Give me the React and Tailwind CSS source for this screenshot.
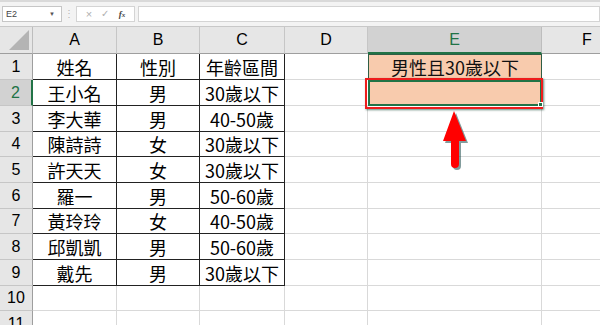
import React from "react";

const cols = [
  { key: "A", w: 84 },
  { key: "B", w: 83 },
  { key: "C", w: 85 },
  { key: "D", w: 83 },
  { key: "E", w: 174 },
  { key: "F", w: 91 },
];

const rowHeights = [26, 26, 26, 25, 26, 26, 25, 26, 26, 25, 26];

const data = [
  ["姓名", "性別", "年齡區間"],
  ["王小名", "男", "30歲以下"],
  ["李大華", "男", "40-50歲"],
  ["陳詩詩", "女", "30歲以下"],
  ["許天天", "女", "30歲以下"],
  ["羅一", "男", "50-60歲"],
  ["黃玲玲", "女", "40-50歲"],
  ["邱凱凱", "男", "50-60歲"],
  ["戴先", "男", "30歲以下"],
];

const cjk = { fontFamily: '"Noto Sans CJK TC", "Noto Sans", sans-serif' };
const ui = { fontFamily: '"Liberation Sans", Arial, sans-serif' };

const FormulaBar = () => (
  <div className="h-[27px] bg-[#f3f3f3] border-t-2 border-[#d9d9d9] border-b border-b-[#c8c8c8] flex items-center" style={ui}>
    <div className="ml-[2px] w-[60px] h-[16px] bg-white border border-[#c6c6c6] flex items-center justify-between pl-[3px] pr-[6px]">
      <span className="text-[9px] text-[#444] leading-none">E2</span>
      <span className="text-[6px] text-[#555] leading-none">▼</span>
    </div>
    <div className="w-[14px] flex justify-center text-[10px] text-[#b5b5b5] leading-none">⋮</div>
    <div className="w-[59px] h-[16px] bg-white border border-[#d4d4d4] flex items-center justify-around px-[4px]">
      <span className="text-[11px] text-[#b0b0b0] leading-none">×</span>
      <span className="text-[10px] text-[#b0b0b0] leading-none">✓</span>
      <span className="text-[9px] italic font-bold text-[#444] leading-none" style={{ fontFamily: '"Liberation Serif", serif' }}>
        f<span className="text-[7px]">x</span>
      </span>
    </div>
    <div className="ml-[3px] flex-1 h-[16px] bg-white border border-[#d4d4d4]" />
  </div>
);

const ColumnHeader = () => (
  <div className="flex h-[27px]" style={ui}>
    <div className="w-[33px] shrink-0 bg-[#e6e6e6] border-r border-[#bdbdbd] border-b border-b-[#9e9e9e] flex items-end justify-end p-[3px]">
      <div className="w-0 h-0 border-l-[20px] border-l-transparent border-b-[20px] border-b-[#b4b4b4]" />
    </div>
    {cols.map((c) => {
      const sel = c.key === "E";
      return (
        <div
          key={c.key}
          style={{ width: c.w }}
          className={
            sel
              ? "shrink-0 bg-[#d2d2d2] border-r border-[#bdbdbd] border-b-2 border-b-[#217346] flex items-center justify-center text-[16px] text-[#217346]"
              : "shrink-0 bg-[#e6e6e6] border-r border-[#c6c6c6] border-b border-b-[#9e9e9e] flex items-center justify-center text-[16px] text-black"
          }
        >
          {c.key}
        </div>
      );
    })}
  </div>
);

const Row = ({ index, h }) => {
  const n = index + 1;
  const rowData = data[index];
  const selRow = n === 2;
  return (
    <div className="flex" style={{ height: h }}>
      <div
        className={
          selRow
            ? "w-[33px] shrink-0 bg-[#d2d2d2] border-r-2 border-[#217346] border-b border-b-[#c6c6c6] flex items-center justify-center text-[16px] text-[#217346]"
            : "w-[33px] shrink-0 bg-[#e6e6e6] border-r border-[#9e9e9e] border-b border-b-[#c6c6c6] flex items-center justify-center text-[16px] text-black"
        }
        style={ui}
      >
        {n}
      </div>
      {cols.map((c, ci) => {
        const inTable = rowData && ci < 3;
        let cls = "shrink-0 border-r border-b flex items-center justify-center text-[18px] leading-none text-black ";
        cls += inTable ? "border-[#222]" : "border-[#d9d9d9]";
        if (c.key === "E" && n === 1) {
          return (
            <div key={c.key} style={{ width: c.w, ...cjk }} className="shrink-0 bg-[#f8cbad] border border-[#2f5e45] flex items-center justify-center text-[18px] leading-none text-[#111]">
              男性且30歲以下
            </div>
          );
        }
        if (c.key === "E" && n === 2) {
          return (
            <div key={c.key} style={{ width: c.w }} className="shrink-0 relative bg-[#f8cbad] border-2 border-[#217346]">
              <div className="absolute -left-[5px] -top-[4px] -right-[3px] -bottom-[5px] border-[2.5px] border-[#ee1c1c] shadow-[1px_1px_2px_rgba(0,60,40,0.6)]" />
              <div className="absolute -right-[3px] -bottom-[3px] w-[5px] h-[5px] bg-[#217346] border border-white" />
            </div>
          );
        }
        if (c.key === "D" && (n === 1 || n === 2)) {
          cls = "shrink-0 border-b border-[#d9d9d9] flex";
        }
        return (
          <div key={c.key} style={{ width: c.w, ...cjk }} className={cls}>
            {inTable ? rowData[ci] : ""}
          </div>
        );
      })}
    </div>
  );
};

const Arrow = () => (
  <svg className="absolute left-[441px] top-[110px]" width="30" height="62" viewBox="0 0 30 62">
    <g transform="translate(2 2)" fill="#1b4a4a" opacity="0.55">
      <path d="M13 1 L25 31 L18 31 L18 54 Q18 58 14 58 Q10 58 10 54 L10 31 L2 31 Z" />
    </g>
    <path d="M13 1 L25 31 L18 31 L18 54 Q18 58 14 58 Q10 58 10 54 L10 31 L2 31 Z" fill="#ff0000" />
  </svg>
);

export default function App() {
  return (
    <div className="w-[600px] h-[325px] overflow-hidden bg-white relative">
      <FormulaBar />
      <ColumnHeader />
      {rowHeights.map((h, i) => (
        <Row key={i} index={i} h={h} />
      ))}
      <Arrow />
    </div>
  );
}
